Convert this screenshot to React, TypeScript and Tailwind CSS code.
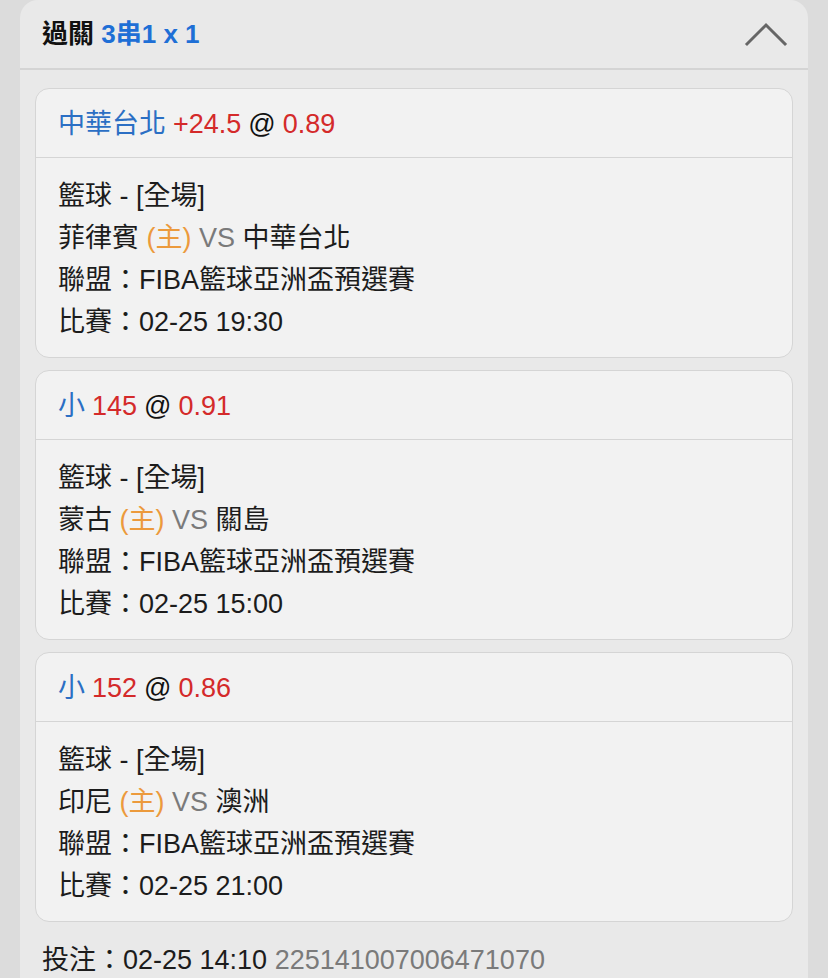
import React from 'react';

interface Bet {
  pick: string;
  line: string;
  odds: string;
  home: string;
  away: string;
  time: string;
}

const bets: Bet[] = [
  { pick: '中華台北', line: '+24.5', odds: '0.89', home: '菲律賓', away: '中華台北', time: '02-25 19:30' },
  { pick: '小', line: '145', odds: '0.91', home: '蒙古', away: '關島', time: '02-25 15:00' },
  { pick: '小', line: '152', odds: '0.86', home: '印尼', away: '澳洲', time: '02-25 21:00' },
];

const BetCard: React.FC<{ bet: Bet }> = ({ bet }) => (
  <div className="rounded-[14px] border border-[#d5d5d5] bg-[#f2f2f2]">
    <div className="flex h-[69px] items-center border-b border-[#d5d5d5] px-[22px] pt-[2px] text-[27px]">
      <span className="text-[#2b6fc4]">{bet.pick}</span>
      <span className="ml-[7px] text-[#d42a2a]">{bet.line}</span>
      <span className="ml-[7px] text-[#111]">@</span>
      <span className="ml-[7px] text-[#d42a2a]">{bet.odds}</span>
    </div>
    <div className="px-[22px] pt-[17px] pb-[14px] text-[27px] leading-[42px] text-[#1c1c1c]">
      <div>籃球 - [全場]</div>
      <div>
        {bet.home} <span className="text-[#ec9a3c]">(主)</span> <span className="text-[#7a7a7a]">VS</span> {bet.away}
      </div>
      <div>聯盟：FIBA籃球亞洲盃預選賽</div>
      <div>比賽：{bet.time}</div>
    </div>
  </div>
);

export default function App() {
  return (
    <div
      className="min-h-[978px] bg-[#dcdcdc] px-[20px]"
      style={{ fontFamily: '"Liberation Sans", "Noto Sans CJK TC", "Noto Sans", sans-serif' }}
    >
      <div className="rounded-t-[18px] bg-[#e9e9e9]">
        <div className="flex h-[70px] items-center justify-between border-b-2 border-[#d4d4d4] pl-[22px] pr-[20px]">
          <div className="text-[26px] font-bold">
            <span className="text-[#111]">過關</span>{' '}
            <span className="text-[#1e6fd6]">3串1 x 1</span>
          </div>
          <svg width="44" height="28" viewBox="0 0 44 28" fill="none">
            <path d="M3 24 L22 5 L41 24" stroke="#666" strokeWidth="3" strokeLinecap="square" />
          </svg>
        </div>
        <div className="flex flex-col gap-[12px] px-[15px] pt-[18px]">
          {bets.map((bet, i) => (
            <BetCard key={i} bet={bet} />
          ))}
        </div>
        <div className="px-[22px] pt-[17px] text-[27px] leading-[42px] text-[#1c1c1c]">
          投注：02-25 14:10 <span className="text-[#7a7a7a]">225141007006471070</span>
        </div>
      </div>
    </div>
  );
}
